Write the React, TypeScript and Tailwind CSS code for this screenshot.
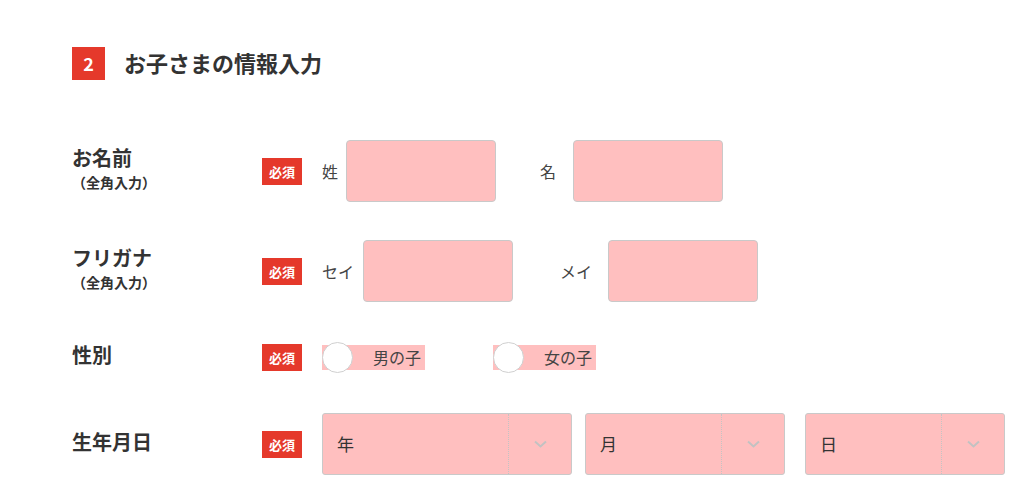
import React from 'react';

const font = { fontFamily: '"Noto Sans CJK JP", "Noto Sans", sans-serif' };

function Badge() {
  return (
    <span className="w-[40px] h-[27px] flex items-center justify-center bg-[#e5392b] text-white text-[13px] font-bold leading-none shrink-0">
      必須
    </span>
  );
}

function Label({ title, sub }: { title: string; sub?: string }) {
  return (
    <div className="w-[190px] shrink-0 flex flex-col text-[#333] mb-[4px]">
      <span className="text-[20px] font-bold leading-[24px]">{title}</span>
      {sub && <span className="text-[14px] font-bold leading-[20px] mt-[2px]">{sub}</span>}
    </div>
  );
}

function TextField({ label, gapClass }: { label: string; gapClass: string }) {
  return (
    <div className="flex items-center">
      <span className={`text-[16px] text-[#444] ${gapClass}`}>{label}</span>
      <div className="w-[150px] h-[62px] bg-[#ffbfbf] border border-[#c9c9c9] rounded-[4px]" />
    </div>
  );
}

function Radio({ label }: { label: string }) {
  return (
    <div className="relative flex items-center h-[31px] w-[103px]">
      <div className="absolute left-0 right-0 top-[3px] h-[25px] bg-[#ffbfbf]" />
      <div className="relative w-[31px] h-[31px] rounded-full bg-white border border-[#d0d0d0]" />
      <span className="relative ml-[20px] text-[16px] text-[#444]">{label}</span>
    </div>
  );
}

function Select({ label, widthClass }: { label: string; widthClass: string }) {
  return (
    <div className={`${widthClass} h-[62px] bg-[#ffbfbf] border border-[#c9c9c9] rounded-[3px] flex`}>
      <div className="flex-1 flex items-center pl-[14px] text-[17px] text-[#333]">{label}</div>
      <div className="w-[63px] border-l border-dotted border-[#c4c4c4] flex items-center justify-center">
        <svg width="13" height="8" viewBox="0 0 13 8" fill="none">
          <path d="M1 1.5L6.5 6.5L12 1.5" stroke="#c2c2c2" strokeWidth="2" />
        </svg>
      </div>
    </div>
  );
}

export default function App() {
  return (
    <div className="w-[1024px] h-[498px] bg-white overflow-hidden pl-[72px] pt-[47px]" style={font}>
      {/* Section header */}
      <div className="flex items-center h-[33px]">
        <span className="w-[33px] h-[33px] bg-[#e5392b] text-white text-[18px] font-bold flex items-center justify-center">
          2
        </span>
        <h2 className="ml-[19px] text-[22px] font-bold text-[#333] mb-[3px]">お子さまの情報入力</h2>
      </div>

      {/* Name */}
      <div className="flex items-center h-[62px] mt-[60px]">
        <Label title="お名前" sub="（全角入力）" />
        <Badge />
        <div className="flex items-center ml-[20px]">
          <TextField label="姓" gapClass="mr-[8px]" />
          <div className="ml-[44px]">
            <TextField label="名" gapClass="mr-[17px]" />
          </div>
        </div>
      </div>

      {/* Kana */}
      <div className="flex items-center h-[62px] mt-[38px]">
        <Label title="フリガナ" sub="（全角入力）" />
        <Badge />
        <div className="flex items-center ml-[20px]">
          <TextField label="セイ" gapClass="mr-[9px]" />
          <div className="ml-[47px]">
            <TextField label="メイ" gapClass="mr-[16px]" />
          </div>
        </div>
      </div>

      {/* Gender */}
      <div className="flex items-center h-[62px] mt-[24px]">
        <Label title="性別" />
        <Badge />
        <div className="flex items-center ml-[20px] gap-[68px]">
          <Radio label="男の子" />
          <Radio label="女の子" />
        </div>
      </div>

      {/* Birthday */}
      <div className="flex items-center h-[62px] mt-[25px]">
        <Label title="生年月日" />
        <Badge />
        <div className="flex items-center ml-[20px]">
          <Select label="年" widthClass="w-[250px]" />
          <div className="ml-[13px]">
            <Select label="月" widthClass="w-[200px]" />
          </div>
          <div className="ml-[20px]">
            <Select label="日" widthClass="w-[200px]" />
          </div>
        </div>
      </div>
    </div>
  );
}
